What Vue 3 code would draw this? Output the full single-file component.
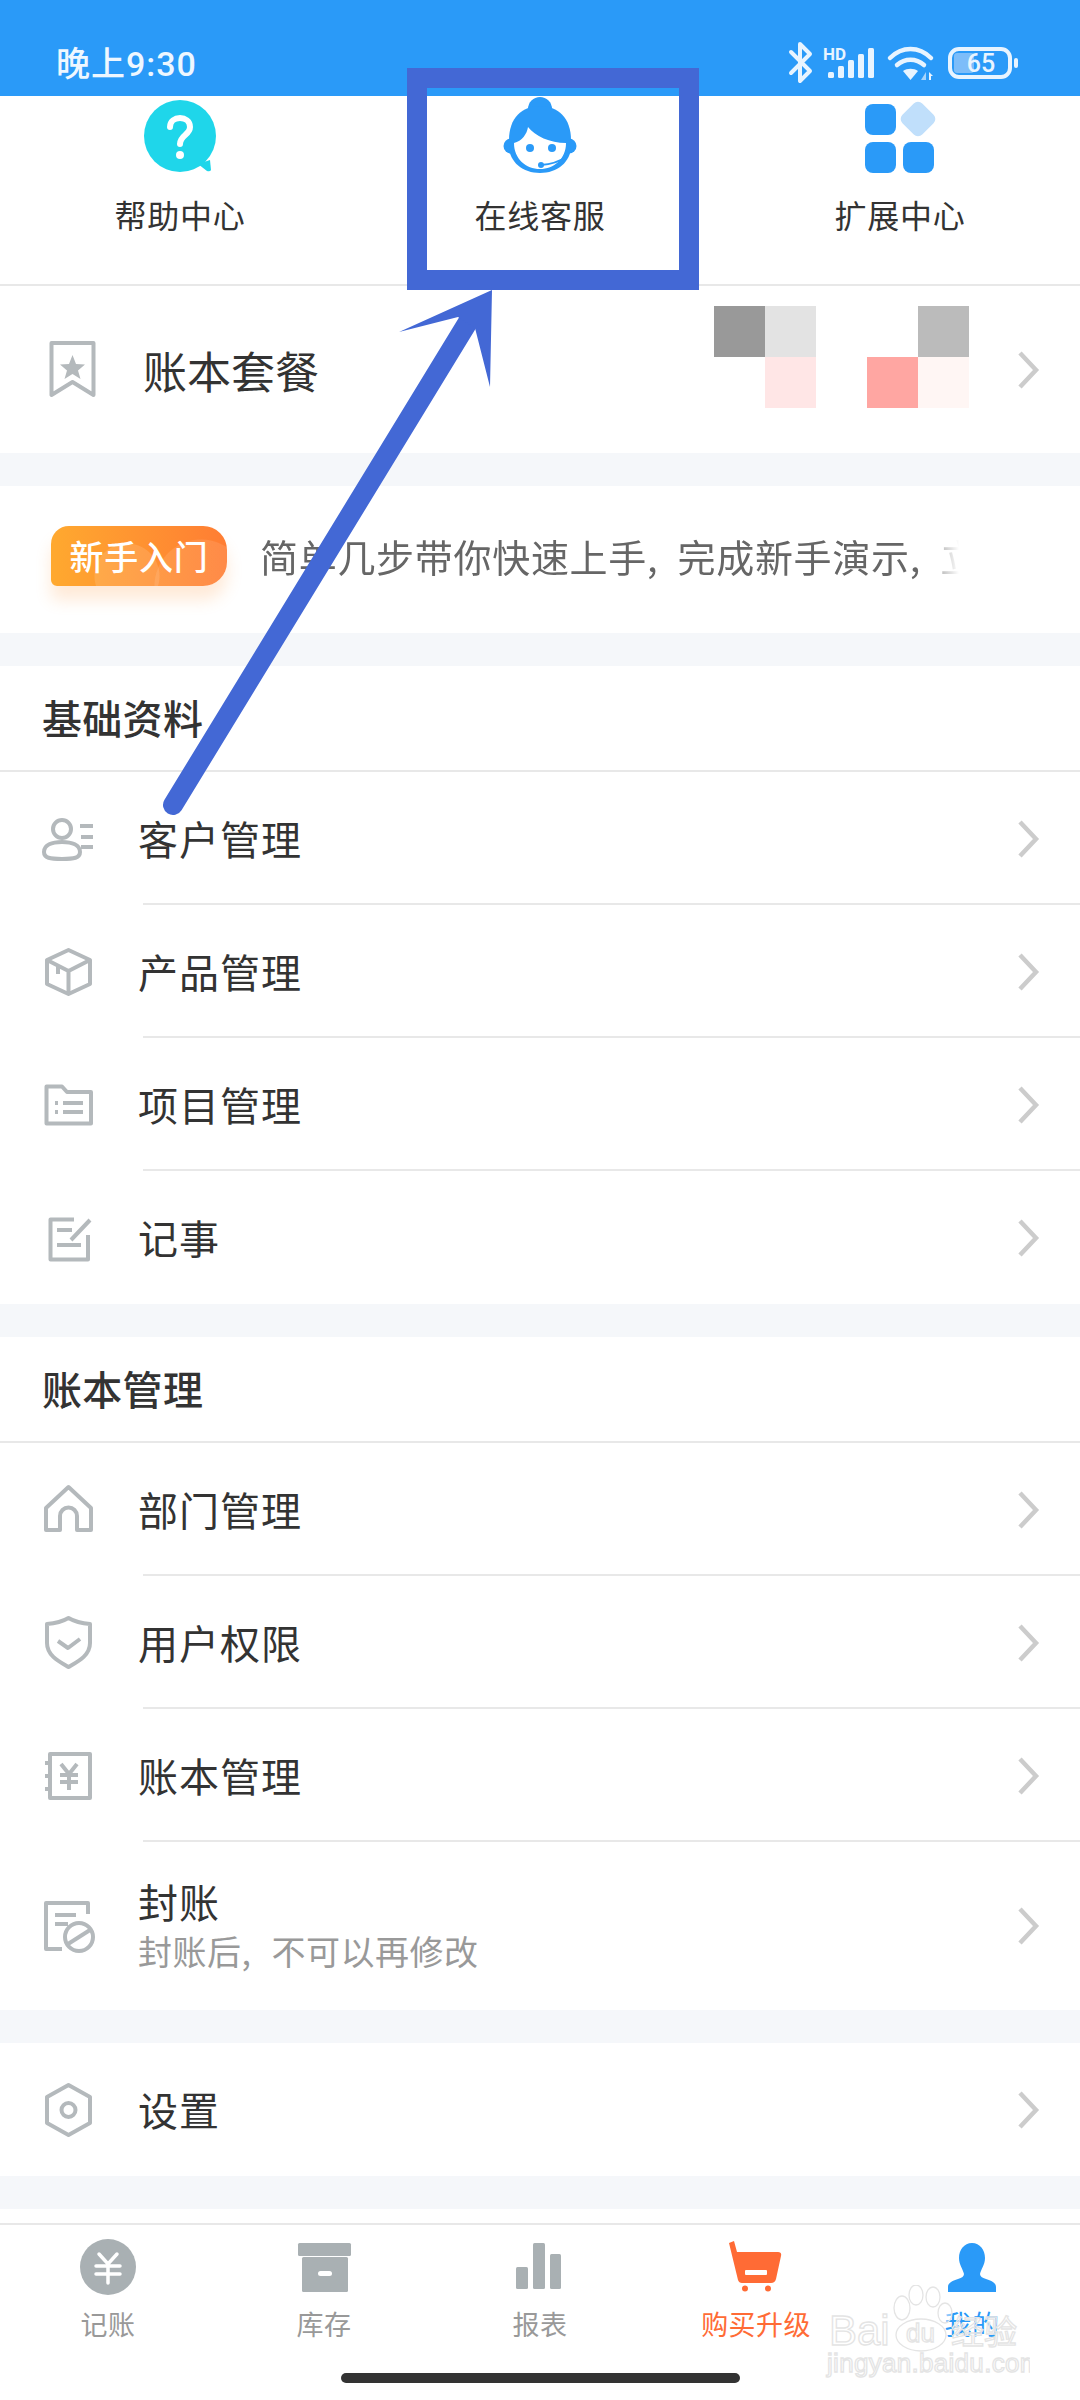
<template>
  <div class="page">
    <div class="status">
      <span class="time">晚上9:30</span>
      <svg class="status-icons" width="235" height="46" viewBox="785 40 235 46">
        <path d="M791 52 L810 71 L800 81 V44 L810 54 L791 73" fill="none" stroke="#e8f4ff" stroke-width="4" stroke-linejoin="round" stroke-linecap="round" />
        <text x="823" y="60" class="hd">HD</text>
        <rect x="828" y="72" width="6" height="6" rx="1.5" fill="#e8f4ff" />
        <rect x="838" y="66" width="6" height="12" rx="1.5" fill="#e8f4ff" />
        <rect x="848" y="60" width="6" height="18" rx="1.5" fill="#e8f4ff" />
        <rect x="858" y="54" width="6" height="24" rx="1.5" fill="#e8f4ff" />
        <rect x="868" y="48" width="6" height="30" rx="1.5" fill="#e8f4ff" />
        <path d="M890 58 C902 46 919 46 931 58 M897 65 C905 58 916 58 924 65" fill="none" stroke="#e8f4ff" stroke-width="4.5" stroke-linecap="round" />
        <path d="M903 71 C907 68 914 68 918 71 L910.5 80 Z" fill="#e8f4ff" />
        <path d="M921 80 L926 72 V80 Z" fill="#a8d4fb" />
        <path d="M929 72 L933 76 L931 76 V80 H929 Z" fill="#e8f4ff" />
        <rect x="950" y="49" width="60" height="28" rx="9" fill="none" stroke="#e8f4ff" stroke-width="4" />
        <rect x="954" y="53" width="20" height="20" rx="3" fill="#7dbdf9" />
        <text x="981" y="72" class="level">65</text>
        <rect x="1014" y="58" width="4" height="10" rx="2" fill="#e8f4ff" />
      </svg>
    </div>

    <div class="shortcuts">
      <div class="shortcut">
        <svg width="80" height="80" viewBox="0 0 80 80">
          <circle cx="40" cy="40" r="36" fill="#1fd6ea" />
          <path d="M58 68 L70 64 L71 74 Q70 76 67 75 Z" fill="#1fd6ea" />
          <path d="M30 31 C30 19 50 19 50 31 C50 39 40 39 40 48" fill="none" stroke="#fff" stroke-width="6" stroke-linecap="round" />
          <circle cx="40" cy="59" r="4" fill="#fff" />
        </svg>
        <span>帮助中心</span>
      </div>
      <div class="shortcut">
        <svg width="80" height="80" viewBox="0 0 80 80">
          <circle cx="40" cy="13" r="12" fill="#2a9af8" />
          <circle cx="11" cy="50" r="7.5" fill="#2a9af8" />
          <circle cx="69" cy="50" r="7.5" fill="#2a9af8" />
          <path d="M9 44 C9 22 22 10 40 10 C58 10 71 22 71 44 V50 C71 66 57 77 40 77 C23 77 9 66 9 50 Z" fill="#2a9af8" />
          <path d="M14 47 C22 45 27 38 28 31 C35 40 50 47 66 47 C66 63 54 73 40 73 C26 73 14 63 14 47 Z" fill="#fff" />
          <circle cx="30" cy="52" r="4" fill="#2a9af8" />
          <circle cx="52" cy="52" r="4" fill="#2a9af8" />
          <circle cx="41" cy="69" r="3" fill="#2a9af8" />
          <path d="M41 69 Q56 68 66 61" fill="none" stroke="#2a9af8" stroke-width="2" />
        </svg>
        <span>在线客服</span>
      </div>
      <div class="shortcut">
        <svg width="80" height="80" viewBox="0 0 80 80">
          <rect x="5" y="8" width="31" height="31" rx="8" fill="#2a9af8" />
          <rect x="5" y="46" width="31" height="31" rx="8" fill="#2a9af8" />
          <rect x="43" y="46" width="31" height="31" rx="8" fill="#2a9af8" />
          <rect x="44" y="9" width="28" height="28" rx="6" fill="#c0dffb" transform="rotate(45 58 23)" />
        </svg>
        <span>扩展中心</span>
      </div>
    </div>

    <div class="package">
      <svg class="package-icon" width="60" height="60" viewBox="0 0 60 60">
        <path d="M9.5 3 H51.5 V55 L30.5 42 L9.5 55 Z" fill="none" stroke="#b4b9bc" stroke-width="4" stroke-linejoin="round" />
        <path d="M30.5 15 L34 24 L43 24.500 L36 30.500 L38.500 39 L30.500 34 L22.500 39 L25 30.500 L18 24.500 L27 24 Z" fill="#b4b9bc" />
      </svg>
      <span class="package-label">账本套餐</span>
      <div class="mosaic">
        <i v-for="(c, i) in mosaic" :key="i" :style="{ background: c }"></i>
      </div>
      <svg class="chevron" width="24" height="40" viewBox="0 0 24 40">
        <path d="M4 3 L20 20 L4 37" fill="none" stroke="#ccc" stroke-width="4.500" />
      </svg>
    </div>

    <div class="intro">
      <div class="badge">新手入门</div>
      <div class="intro-text">简单几步带你快速上手, 完成新手演示, 立即体验</div>
    </div>

    <div class="section">
      <div class="section-title">基础资料</div>
      <div v-for="item in basics" :key="item.label" class="item">
        <svg class="item-icon" width="60" height="60" viewBox="0 0 60 60">
          <path v-for="d in item.paths" :key="d" :d="d" fill="none" stroke="#b4b9bc" stroke-width="4" stroke-linejoin="round" />
        </svg>
        <span class="item-label">{{ item.label }}</span>
        <svg class="chevron" width="24" height="40" viewBox="0 0 24 40">
          <path d="M4 3 L20 20 L4 37" fill="none" stroke="#ccc" stroke-width="4.500" />
        </svg>
      </div>
    </div>

    <div class="section">
      <div class="section-title">账本管理</div>
      <div v-for="item in ledger" :key="item.label" class="item" :class="{ 'item--tall': item.sub }">
        <svg class="item-icon" width="60" height="60" viewBox="0 0 60 60">
          <path v-for="d in item.paths" :key="d" :d="d" fill="none" stroke="#b4b9bc" stroke-width="4" stroke-linejoin="round" />
        </svg>
        <div class="item-body">
          <span class="item-label">{{ item.label }}</span>
          <span v-if="item.sub" class="item-sub">{{ item.sub }}</span>
        </div>
        <svg class="chevron" width="24" height="40" viewBox="0 0 24 40">
          <path d="M4 3 L20 20 L4 37" fill="none" stroke="#ccc" stroke-width="4.500" />
        </svg>
      </div>
    </div>

    <div class="section">
      <div class="item">
        <svg class="item-icon" width="60" height="60" viewBox="0 0 60 60">
          <path d="M30.500 5 L52 17 V43 L30.500 55 L9 43 V17 Z M37.500 30 A7 7 0 1 1 23.500 30 A7 7 0 1 1 37.500 30 Z" fill="none" stroke="#b4b9bc" stroke-width="4" stroke-linejoin="round" />
        </svg>
        <span class="item-label">设置</span>
        <svg class="chevron" width="24" height="40" viewBox="0 0 24 40">
          <path d="M4 3 L20 20 L4 37" fill="none" stroke="#ccc" stroke-width="4.500" />
        </svg>
      </div>
    </div>

    <div class="tabbar">
      <div class="tabs">
        <div class="tab">
          <svg width="60" height="60" viewBox="0 0 60 60">
            <circle cx="30" cy="30" r="28" fill="#a9b0b3" />
            <path d="M21 17 L30 27 L39 17 M18 29 H42 M18 37 H42 M30 27 V46" fill="none" stroke="#fff" stroke-width="3.500" stroke-linecap="round" />
          </svg>
          <span>记账</span>
        </div>
        <div class="tab">
          <svg width="60" height="60" viewBox="0 0 60 60">
            <rect x="4" y="6" width="53" height="13" rx="1.500" fill="#a9b0b3" />
            <rect x="8" y="20" width="46" height="35" rx="1.500" fill="#a9b0b3" />
            <rect x="24" y="34" width="14" height="5" rx="2.500" fill="#fff" />
          </svg>
          <span>库存</span>
        </div>
        <div class="tab">
          <svg width="60" height="60" viewBox="0 0 60 60">
            <rect x="6" y="30" width="12" height="22" rx="1.500" fill="#a9b0b3" />
            <rect x="23" y="6" width="12" height="46" rx="1.500" fill="#a9b0b3" />
            <rect x="40" y="17" width="11" height="35" rx="1.500" fill="#a9b0b3" />
          </svg>
          <span>报表</span>
        </div>
        <div class="tab tab--buy">
          <svg width="60" height="60" viewBox="0 0 60 60">
            <path d="M3 6 L8 4 L11 15 H52 Q56 15 55 19 L50 42 Q49 46 45 46 H16 Q13 46 12 43 Z" fill="#ff6b35" />
            <rect x="19" y="33" width="22" height="5" rx="1" fill="#fff" />
            <circle cx="19" cy="51.500" r="3" fill="#ff6b35" />
            <circle cx="42" cy="51.500" r="3" fill="#ff6b35" />
          </svg>
          <span>购买升级</span>
        </div>
        <div class="tab tab--mine">
          <svg width="60" height="60" viewBox="0 0 60 60">
            <path d="M30 6 C38 6 43 13 43 21 C43 28 39 32 38 37 C38 39 40 41 44 42 C50 44 54 46 54 50 V55 H6 V50 C6 46 10 44 16 42 C20 41 22 39 22 37 C21 32 17 28 17 21 C17 13 22 6 30 6 Z" fill="#2a9af8" />
          </svg>
          <span>我的</span>
        </div>
      </div>
      <div class="home-bar"></div>
    </div>

    <svg class="annotation" width="1080" height="900" viewBox="0 0 1080 900">
      <rect x="417" y="78" width="272" height="202" fill="none" stroke="#4368d5" stroke-width="20" />
      <line x1="173" y1="805" x2="468" y2="322" stroke="#4368d5" stroke-width="20" stroke-linecap="round" />
      <polygon points="492,290 399,332 458,317 475,328 490,387" fill="#4368d5" />
    </svg>

    <svg class="watermark" width="210" height="100" viewBox="820 2285 210 100">
      <g fill="rgba(255,255,255,0.45)" stroke="#e4e4e4" stroke-width="1.300">
        <ellipse cx="902" cy="2308" rx="8" ry="12" />
        <ellipse cx="916" cy="2295" rx="7" ry="10" />
        <ellipse cx="933" cy="2297" rx="7" ry="10" />
        <ellipse cx="945" cy="2313" rx="7" ry="10" />
        <ellipse cx="921" cy="2335" rx="25" ry="16" />
        <text x="829" y="2345" class="wm-big">Bai</text>
        <text x="906" y="2342" class="wm-du">du</text>
        <text x="951" y="2344" class="wm-cn">经验</text>
        <text x="827" y="2372" class="wm-url">jingyan.baidu.com</text>
      </g>
    </svg>
  </div>
</template>

<script setup>
const mosaic = [
  '#999', '#e3e3e3', 'transparent', 'transparent', '#bbb',
  'transparent', '#ffe6e6', 'transparent', '#ffa6a2', '#fff6f4'
]

const basics = [
  {
    label: '客户管理',
    paths: [
      'M33 20 A9 9 0 1 1 15 20 A9 9 0 1 1 33 20 Z',
      'M6 43 C6 36 14 33 24 33 C34 33 42 36 42 43 C42 49 36 50 24 50 C12 50 6 49 6 43 Z',
      'M42 17 H55 M43 28 H55 M43 38 H55'
    ]
  },
  {
    label: '产品管理',
    paths: [
      'M30.500 8 L52 18 V42 L30.500 52 L9 42 V18 Z',
      'M9 18 L30.500 29 L52 18 M30.500 29 V52 M20 23.500 V32'
    ]
  },
  {
    label: '项目管理',
    paths: [
      'M8.500 11.500 H24 L29 17 H53 V48.500 H8.500 Z',
      'M17 28 H20 M25 28 H45 M17 37 H20 M25 37 H45'
    ]
  },
  {
    label: '记事',
    paths: [
      'M36 11.500 H12.500 V51.500 H50 V27',
      'M19 22 H34 M19 37 H43 M33 32 L52 12'
    ]
  }
]

const ledger = [
  {
    label: '部门管理',
    paths: ['M8 28 L30.500 7 L53 28 V50 H39 V36 A8.500 8.500 0 0 0 22 36 V50 H8 Z']
  },
  {
    label: '用户权限',
    paths: [
      'M30.500 5 Q22 10 9 11 V30 C9 43 22 49 30.500 54 C39 49 52 43 52 30 V11 Q39 10 30.500 5 Z',
      'M20 28 L30 35 L42 26'
    ]
  },
  {
    label: '账本管理',
    paths: [
      'M12 8 H52 V52 H12 Z',
      'M7 17 H14 M7 30 H14 M7 43 H14',
      'M23 18 L31 28 L39 18 M22 29 H40 M22 36 H40 M31 28 V44'
    ]
  },
  {
    label: '封账',
    sub: '封账后, 不可以再修改',
    paths: [
      'M50 18 V7 H8 V53 H24',
      'M17 19 H38 M17 28 H30',
      'M55 41 A14 14 0 1 1 27 41 A14 14 0 1 1 55 41 Z',
      'M30 48 L52 34'
    ]
  }
]
</script>

<style>
html,
body {
  margin: 0;
  background: #f5f7fa;
}
</style>

<style scoped>
.page {
  position: relative;
  width: 1080px;
  height: 2400px;
  overflow: hidden;
  background: #f5f7fa;
  color: #333;
  font-family: 'Noto Sans CJK SC', 'Noto Sans', sans-serif;
}

/* Status bar */
.status {
  display: flex;
  align-items: flex-start;
  justify-content: space-between;
  box-sizing: border-box;
  height: 96px;
  padding: 40px 60px 0 56px;
  background: #2a9af8;
}

.time {
  margin-top: 1px;
  font-family: Roboto, 'Noto Sans CJK SC', sans-serif;
  font-size: 34px;
  line-height: 46px;
  font-weight: 500;
  letter-spacing: 1px;
  color: #eef7ff;
}

.hd {
  font-family: Roboto, sans-serif;
  font-size: 17px;
  font-weight: 700;
  fill: #e8f4ff;
}

.level {
  font-family: Roboto, sans-serif;
  font-size: 25px;
  font-weight: 500;
  text-anchor: middle;
  fill: #e8f4ff;
}

/* Top shortcuts */
.shortcuts {
  display: grid;
  grid-template-columns: repeat(3, 1fr);
  box-sizing: border-box;
  height: 190px;
  background: #fff;
  border-bottom: 2px solid #e8e8e8;
}

.shortcut {
  display: flex;
  flex-direction: column;
  align-items: center;
  gap: 16px;
  font-size: 32px;
  line-height: 44px;
  letter-spacing: 0.7px;
  color: #333;
}

.shortcut svg {
  display: block;
}

/* Package row */
.package {
  display: flex;
  align-items: center;
  height: 167px;
  padding: 0 40px 0 42px;
  margin-bottom: 33px;
  background: #fff;
}

.package-label {
  margin-left: 41px;
  font-size: 44px;
  line-height: 60px;
}

.mosaic {
  display: grid;
  grid-template-columns: repeat(5, 51px);
  grid-auto-rows: 51px;
  align-self: flex-start;
  margin: 20px 47px 0 auto;
}

.mosaic i {
  display: block;
}

/* New user intro */
.intro {
  display: flex;
  align-items: center;
  box-sizing: border-box;
  height: 147px;
  padding: 0 0 7px 51px;
  margin-bottom: 33px;
  background: #fff;
}

.badge {
  flex: none;
  width: 176px;
  height: 60px;
  border-radius: 18px 24px 24px 6px;
  background:
    radial-gradient(circle at 76px 50px, rgba(255, 255, 255, 0.12) 0 32px, transparent 33px),
    radial-gradient(circle at 150px 60px, rgba(255, 255, 255, 0.1) 0 46px, transparent 47px),
    linear-gradient(90deg, #ffa92f, #ff7d33);
  box-shadow: 0 14px 16px rgba(255, 150, 60, 0.2);
  color: #fff;
  font-size: 34px;
  font-weight: 500;
  line-height: 60px;
  letter-spacing: 0.7px;
  text-align: center;
}

.intro-text {
  width: 699px;
  margin-left: 33px;
  overflow: hidden;
  white-space: nowrap;
  font-size: 38px;
  line-height: 52px;
  letter-spacing: 0.7px;
  word-spacing: 10px;
  color: #666;
  -webkit-mask-image: linear-gradient(90deg, #000 94%, transparent);
  mask-image: linear-gradient(90deg, #000 94%, transparent);
}

/* Menu sections */
.section {
  margin-bottom: 33px;
  background: #fff;
}

.section-title {
  box-sizing: border-box;
  height: 106px;
  padding-left: 42px;
  border-bottom: 2px solid #e8e8e8;
  font-size: 40px;
  line-height: 102px;
  font-weight: 500;
  letter-spacing: 0.3px;
}

.item {
  position: relative;
  display: flex;
  align-items: center;
  height: 133px;
  padding: 0 40px 0 38px;
}

.item--tall {
  height: 168px;
}

.item::after {
  content: '';
  position: absolute;
  left: 143px;
  right: 0;
  bottom: 0;
  height: 2px;
  background: #e8e8e8;
}

.item:last-child::after {
  display: none;
}

.item-icon {
  flex: none;
  margin-right: 40px;
}

.item-body {
  display: flex;
  flex-direction: column;
}

.item-label {
  margin-top: -2px;
  font-size: 40px;
  line-height: 52px;
  letter-spacing: 1px;
  color: #333;
}

.item-sub {
  font-size: 34px;
  line-height: 48px;
  letter-spacing: 0.5px;
  word-spacing: 12px;
  color: #999;
}

.chevron {
  flex: none;
  margin-left: auto;
}

.mosaic + .chevron {
  margin-left: 0;
}

/* Bottom tabs */
.tabbar {
  box-sizing: border-box;
  height: 192px;
  padding-top: 14px;
  background: #fff;
}

.tabs {
  display: grid;
  grid-template-columns: repeat(5, 1fr);
  padding-top: 12px;
  border-top: 2px solid #e8e8e8;
}

.tab {
  display: flex;
  flex-direction: column;
  align-items: center;
  gap: 7px;
  font-size: 27px;
  line-height: 40px;
  letter-spacing: 0.4px;
  color: #999;
}

.tab svg {
  display: block;
}

.tab--buy {
  color: #ff6b35;
}

.tab--mine {
  color: #2a9af8;
}

.home-bar {
  width: 399px;
  height: 10px;
  margin: 29px auto 0;
  border-radius: 5px;
  background: #333;
}

/* Overlays */
.annotation {
  position: absolute;
  left: 0;
  top: 0;
  pointer-events: none;
}

.watermark {
  position: absolute;
  left: 820px;
  top: 2285px;
  pointer-events: none;
}

.wm-big {
  font-family: 'Liberation Sans', sans-serif;
  font-size: 42px;
}

.wm-du {
  font-family: 'Liberation Sans', sans-serif;
  font-size: 26px;
}

.wm-cn {
  font-family: 'Noto Sans CJK SC', sans-serif;
  font-size: 33px;
}

.wm-url {
  font-family: 'Liberation Sans', sans-serif;
  font-size: 26px;
  letter-spacing: 0.3px;
}
</style>
